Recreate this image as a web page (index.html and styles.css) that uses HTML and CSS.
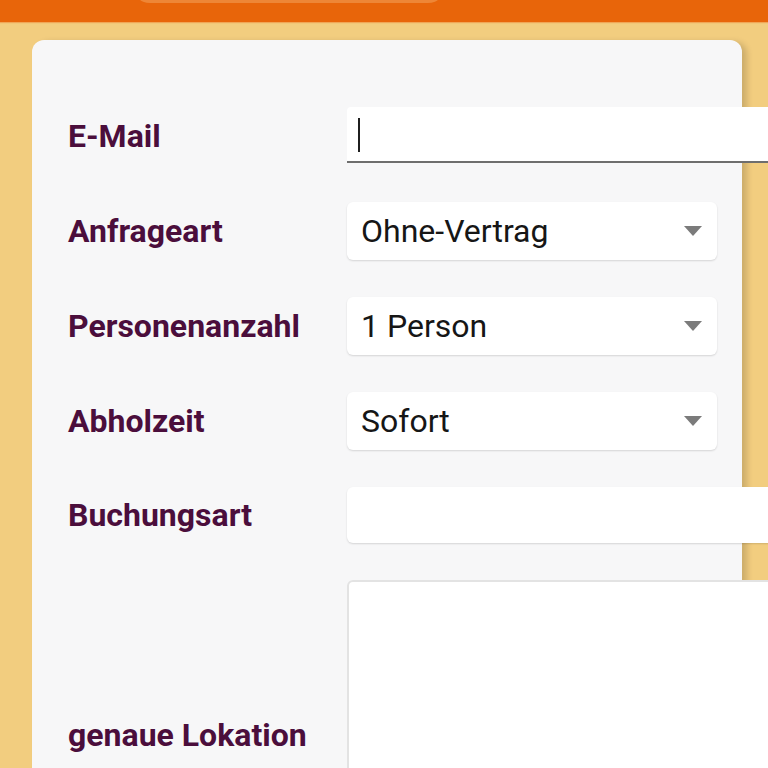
FILE: index.html
```html
<!DOCTYPE html>
<html lang="de">
<head>
<meta charset="utf-8">
<title>Anfrage</title>
<link rel="stylesheet" href="styles.css">
</head>
<body>
<header class="topbar">
  <div class="search-pill"></div>
</header>
<main class="card">
  <form class="form">
    <label class="label">E-Mail</label>
    <div class="field field-email"><span class="caret"></span></div>

    <label class="label">Anfrageart</label>
    <div class="select"><span class="select-value">Ohne-Vertrag</span><span class="arrow"></span></div>

    <label class="label">Personenanzahl</label>
    <div class="select"><span class="select-value">1 Person</span><span class="arrow"></span></div>

    <label class="label">Abholzeit</label>
    <div class="select"><span class="select-value">Sofort</span><span class="arrow"></span></div>

    <label class="label">Buchungsart</label>
    <div class="field field-plain"></div>

    <label class="label">genaue Lokation</label>
    <div class="textarea"></div>
  </form>
</main>
</body>
</html>
```

FILE: styles.css
```css
html, body {
  margin: 0;
  padding: 0;
  overflow: hidden;
  height: 100%;
}

body {
  background: #f2cd7f;
  font-family: Roboto, "Noto Sans", "Liberation Sans", sans-serif;
}

.topbar {
  height: 22px;
  background: #e8650a;
  box-shadow: 0 1px 1px rgba(240, 150, 70, 0.7);
  overflow: hidden;
  display: flex;
  padding-left: 132px;
  position: relative;
  z-index: 2;
}

.search-pill {
  width: 314px;
  height: 40px;
  margin-top: -37px;
  border-radius: 18px;
  background: #ee8636;
}

.card {
  margin: 18px 0 0 32px;
  width: 710px;
  height: 800px;
  background: #f7f7f8;
  border-radius: 12px;
  box-shadow: 5px 2px 6px rgba(0, 0, 0, 0.16);
  padding: 67px 0 0 36px;
  box-sizing: border-box;
}

.form {
  display: grid;
  grid-template-columns: 279px 460px;
  align-items: center;
  row-gap: 37px;
}

.label {
  font-weight: 700;
  font-size: 32px;
  color: #4b0e3c;
  line-height: 40px;
}

.field {
  height: 55px;
  background: #ffffff;
  box-sizing: border-box;
}

.field-email {
  height: 56px;
  margin-bottom: 2px;
  align-self: start;
  border-bottom: 2px solid #6e6e6e;
  border-radius: 4px 4px 0 0;
  padding: 11px 0 0 11px;
}

.caret {
  display: block;
  width: 2px;
  height: 34px;
  background: #1f1f1f;
}

.field-plain {
  height: 56px;
  border-radius: 6px;
  box-shadow: 0 1px 2px rgba(0, 0, 0, 0.14);
}

.select {
  width: 370px;
  height: 58px;
  background: #ffffff;
  border-radius: 6px;
  box-shadow: 0 1px 2px rgba(0, 0, 0, 0.14);
  display: flex;
  align-items: center;
  justify-content: space-between;
  padding: 0 15px 0 14px;
  box-sizing: border-box;
}

.select-value {
  font-size: 32px;
  color: #161616;
}

.arrow {
  width: 0;
  height: 0;
  border-left: 9px solid transparent;
  border-right: 9px solid transparent;
  border-top: 10px solid #7b7b7b;
}

.textarea {
  height: 310px;
  background: #ffffff;
  border: 2px solid #e3e3e3;
  border-radius: 6px;
  box-sizing: border-box;
}
```
